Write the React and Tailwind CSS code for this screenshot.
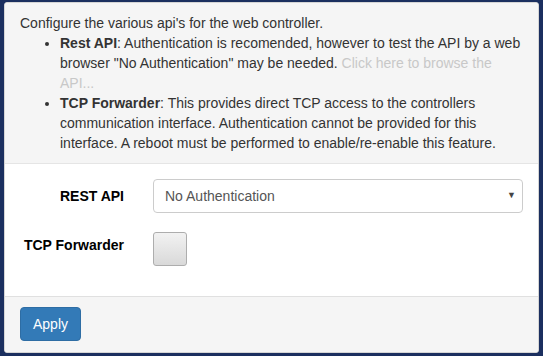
import React from 'react';

const App = () => {
  return (
    <div className="w-[543px] h-[356px] bg-[#1b2f5f] pt-[2px] pl-[4px] pr-[4px] pb-[3px] font-['Liberation_Sans',Arial,sans-serif] text-[14px] leading-[20px] text-[#333]">
      <div className="h-full bg-white rounded-[3px] border border-[#d5d5d5] overflow-hidden flex flex-col">
        <div className="bg-[#f5f5f5] border-b border-[#e5e5e5] pt-[10px] pb-[10px] pl-[15px] pr-[15px]">
          <p>Configure the various api's for the web controller.</p>
          <ul className="list-disc pl-[40px]">
            <li>
              <b>Rest API</b>: Authentication is recomended, however to test the API by a web browser "No Authentication" may be needed.{' '}
              <a className="text-[#c8c8c8] cursor-pointer">Click here to browse the API...</a>
            </li>
            <li>
              <b>TCP Forwarder</b>: This provides direct TCP access to the controllers communication interface. Authentication cannot be provided for this interface. A reboot must be performed to enable/re-enable this feature.
            </li>
          </ul>
        </div>

        <div className="flex-1 pt-[15px] pl-[15px] pr-[15px] flex flex-col gap-[19px]">
          <div className="flex items-start">
            <label className="w-[104px] text-right font-bold pt-[7px] text-black">REST API</label>
            <div className="ml-[29px] flex-1 relative h-[34px] border border-[#ccc] rounded-[4px] bg-white flex items-center pl-[11px] text-[#555]">
              No Authentication
              <span className="absolute right-[6px] top-[10px] text-[9px] leading-[10px] text-[#444]">▼</span>
            </div>
          </div>
          <div className="flex items-start">
            <label className="w-[104px] text-right font-bold pt-[3px] text-black">TCP Forwarder</label>
            <div className="ml-[29px] w-[34px] h-[34px] rounded-[3px] border border-[#adadad] bg-gradient-to-b from-[#f2f2f2] to-[#d9d9d9]"></div>
          </div>
        </div>

        <div className="bg-[#f5f5f5] border-t border-[#e0e0e0] h-[56px] pt-[10px] pl-[15px]">
          <button className="w-[61px] h-[34px] bg-[#337ab7] border border-[#2e6da4] rounded-[4px] text-white text-[14px]">Apply</button>
        </div>
      </div>
    </div>
  );
};

export default App;
